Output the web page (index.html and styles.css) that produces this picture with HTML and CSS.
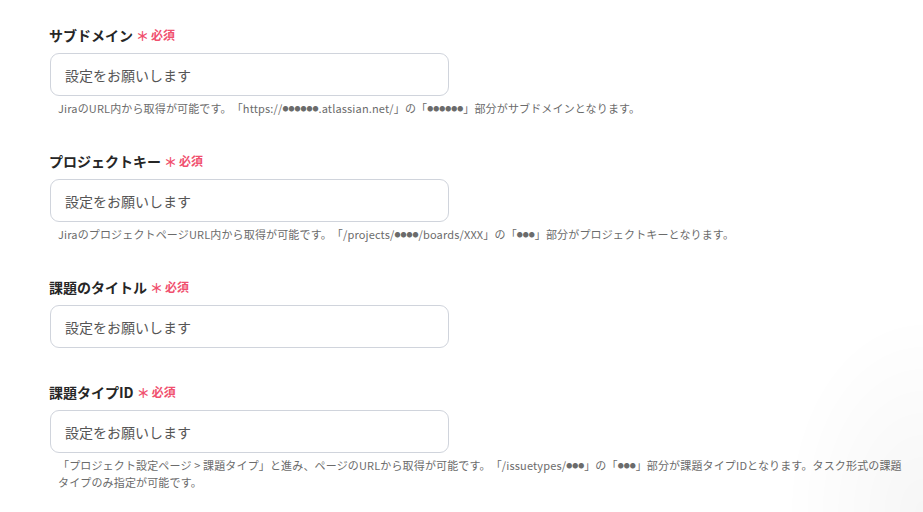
FILE: index.html
```html
<!DOCTYPE html>
<html lang="ja">
<head>
<meta charset="utf-8">
<link rel="stylesheet" href="styles.css">
</head>
<body>
<div class="page">
  <div class="field">
    <div class="label">サブドメイン<span class="req"><span class="ast">＊</span>必須</span></div>
    <div class="input">設定をお願いします</div>
    <div class="help">JiraのURL内から取得が可能です。「https://<span class="dots">●●●●●●</span>.atlassian.net/」の「<span class="dots">●●●●●●</span>」部分がサブドメインとなります。</div>
  </div>
  <div class="field">
    <div class="label">プロジェクトキー<span class="req"><span class="ast">＊</span>必須</span></div>
    <div class="input">設定をお願いします</div>
    <div class="help">JiraのプロジェクトページURL内から取得が可能です。「/projects/<span class="dots">●●●●</span>/boards/XXX」の「<span class="dots">●●●</span>」部分がプロジェクトキーとなります。</div>
  </div>
  <div class="field">
    <div class="label">課題のタイトル<span class="req"><span class="ast">＊</span>必須</span></div>
    <div class="input">設定をお願いします</div>
  </div>
  <div class="field">
    <div class="label">課題タイプID<span class="req"><span class="ast">＊</span>必須</span></div>
    <div class="input">設定をお願いします</div>
    <div class="help">「プロジェクト設定ページ &gt; 課題タイプ」と進み、ページのURLから取得が可能です。「/issuetypes/<span class="dots">●●●</span>」の「<span class="dots">●●●</span>」部分が課題タイプIDとなります。タスク形式の課題タイプのみ指定が可能です。</div>
  </div>
</div>
<div class="shade"></div>
</body>
</html>
```

FILE: styles.css
```css
html, body {
  margin: 0;
  padding: 0;
  background: #ffffff;
  width: 923px;
  height: 512px;
  overflow: hidden;
}
body {
  font-family: "Noto Sans CJK JP", "Noto Sans", sans-serif;
  color: #222222;
}
.page {
  padding: 25px 0 0 49px;
  display: flex;
  flex-direction: column;
}
.field {
  display: flex;
  flex-direction: column;
  margin-bottom: 34px;
}
.label {
  font-size: 14px;
  font-weight: 700;
  line-height: 20px;
  height: 20px;
  display: flex;
  align-items: center;
  color: #262626;
}
.req {
  color: #f0506e;
  font-size: 12px;
  font-weight: 700;
  margin-left: 3px;
  display: flex;
  align-items: center;
}
.ast {
  font-size: 13px;
  margin-right: 2px;
  position: relative;
  top: 1px;
}
.input {
  margin-top: 8px;
  margin-left: 1px;
  width: 399px;
  height: 43px;
  box-sizing: border-box;
  border: 1px solid #d0d4dc;
  border-radius: 9px;
  padding: 0 14px;
  display: flex;
  align-items: center;
  font-size: 14px;
  color: #555555;
}
.help {
  margin-top: 4px;
  margin-left: 9px;
  width: 852px;
  font-size: 11px;
  line-height: 17px;
  letter-spacing: 0.15px;
  color: #6b6b6b;
  text-spacing-trim: space-all;
}
.dots {
  font-size: 6px;
  line-height: 6px;
  letter-spacing: 0;
  position: relative;
  top: -2px;
}
.shade {
  position: fixed;
  right: 0;
  bottom: 0;
  width: 140px;
  height: 200px;
  background: radial-gradient(ellipse at 100% 100%, rgba(0,0,0,0.035), rgba(0,0,0,0) 70%);
  pointer-events: none;
}
```
